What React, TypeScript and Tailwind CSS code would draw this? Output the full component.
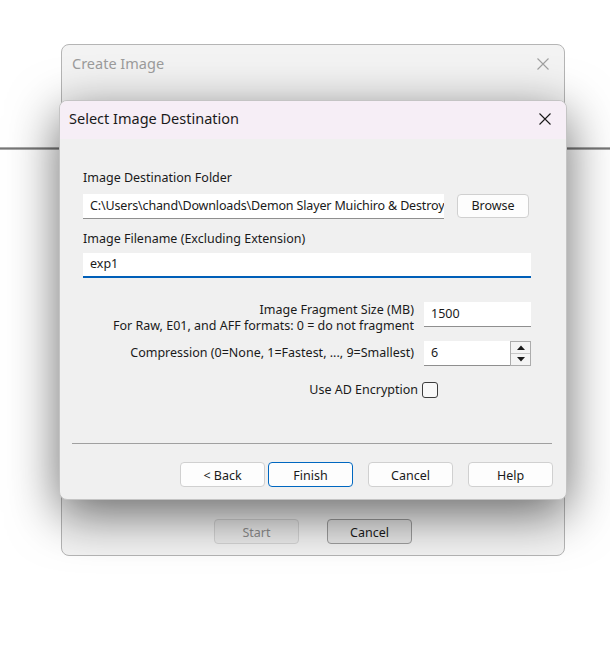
import React from 'react'

function CloseIcon({ color }: { color: string }) {
  return (
    <svg width="14" height="14" viewBox="0 0 14 14" fill="none">
      <path d="M1.5 1.5L12.5 12.5M12.5 1.5L1.5 12.5" stroke={color} strokeWidth="1.1" />
    </svg>
  )
}

function WinButton({ children, primary, className }: { children: React.ReactNode; primary?: boolean; className?: string }) {
  const border = primary ? 'border-[#0067c0]' : 'border-[#d0d0d0]'
  return (
    <button
      className={`h-[25px] w-[85px] rounded-[4px] border ${border} bg-[#fdfdfd] pt-[3px] text-[12.5px] leading-none text-[#1a1a1a] ${className ?? ''}`}
    >
      {children}
    </button>
  )
}

export default function App() {
  return (
    <div
      className="relative h-[657px] w-[610px] overflow-hidden bg-white"
      style={{ fontFamily: '"Segoe UI", "Noto Sans", sans-serif' }}
    >
      {/* app behind the dialogs */}
      <div className="pt-[147px]">
        <div className="h-[3px] border-y border-[#a8a8a8] bg-[#777777]" />
      </div>

      {/* Create Image (parent window) */}
      <div className="absolute left-[61px] top-[44px] flex h-[512px] w-[504px] flex-col rounded-[8px] border border-[#b5b5b5] bg-[#f3f3f3]">
        <div className="flex h-[40px] items-center justify-between pb-[2px] pl-[10px] pr-[14px]">
          <span className="text-[14.5px] text-[#9c9c9c]">Create Image</span>
          <CloseIcon color="#a0a0a0" />
        </div>
        <div className="flex-1" />
        <div className="flex justify-center gap-[28px] pb-[11px]">
          <button className="h-[25px] w-[85px] rounded-[4px] border border-[#d4d4d4] bg-[#ebebeb] pt-[3px] text-[12.5px] leading-none text-[#8c8c8c]">
            Start
          </button>
          <button className="h-[25px] w-[85px] rounded-[4px] border border-[#9c9c9c] bg-[#e6e6e6] pt-[3px] text-[12.5px] leading-none text-[#1a1a1a]">
            Cancel
          </button>
        </div>
      </div>

      {/* Select Image Destination (modal) */}
      <div className="absolute left-[59px] top-[100px] flex h-[400px] w-[508px] flex-col overflow-hidden rounded-[8px] border border-[#c4c4c4] bg-[#f0f0f0] shadow-[0_14px_50px_rgba(0,0,0,0.58)]">
        <div className="flex h-[38px] shrink-0 items-center justify-between bg-[#f6eef6] pb-[3px] pl-[9px] pr-[14px]">
          <span className="text-[14.5px] text-[#1a1a1a]">Select Image Destination</span>
          <CloseIcon color="#1a1a1a" />
        </div>

        <div className="flex flex-col pl-[23px] pr-[35px] pt-[31px] text-[12.5px] text-[#1a1a1a]">
          <div className="h-[16px] leading-[16px]">Image Destination Folder</div>
          <div className="mt-[8px] flex items-start gap-[13px]">
            <div className="flex h-[25px] w-[361px] items-center overflow-hidden whitespace-nowrap border-b border-[#8f8f8f] bg-white pl-[7px] tracking-[-0.15px]">
              C:\Users\chand\Downloads\Demon Slayer Muichiro &amp; Destroy
            </div>
            <button className="h-[24px] w-[72px] rounded-[4px] border border-[#d0d0d0] bg-[#fdfdfd] leading-none">Browse</button>
          </div>

          <div className="mt-[12px] h-[16px] leading-[16px]">Image Filename (Excluding Extension)</div>
          <div className="mt-[6px] flex h-[25px] w-[448px] items-center border-b-2 border-[#005fb8] bg-white pl-[7px]">
            exp1
          </div>

          <div className="mt-[24px] flex items-start gap-[10px]">
            <div className="flex-1 text-right leading-[16px]">
              <div>Image Fragment Size (MB)</div>
              <div>For Raw, E01, and AFF formats: 0 = do not fragment</div>
            </div>
            <div className="flex h-[25px] w-[107px] items-center border-b border-[#8f8f8f] bg-white pl-[7px]">1500</div>
          </div>

          <div className="mt-[7px] flex items-center gap-[10px]">
            <div className="flex-1 text-right">Compression (0=None, 1=Fastest, ..., 9=Smallest)</div>
            <div className="flex h-[25px] w-[107px] bg-white">
              <div className="flex flex-1 items-center border-b border-[#8f8f8f] pl-[7px]">6</div>
              <div className="flex w-[21px] flex-col border border-[#acacac] bg-[#f4f4f4]">
                <div className="flex flex-1 items-center justify-center border-b border-[#c8c8c8]">
                  <svg width="8" height="5" viewBox="0 0 8 5">
                    <path d="M0 5L4 0.5L8 5Z" fill="#1a1a1a" />
                  </svg>
                </div>
                <div className="flex flex-1 items-center justify-center">
                  <svg width="8" height="5" viewBox="0 0 8 5">
                    <path d="M0 0L4 4.5L8 0Z" fill="#1a1a1a" />
                  </svg>
                </div>
              </div>
            </div>
          </div>

          <div className="mr-[93px] mt-[16px] flex items-center justify-end gap-[4px]">
            <span className="leading-[16px]">Use AD Encryption</span>
            <div className="h-[16px] w-[16px] rounded-[3px] border border-[#3c3c3c] bg-[#f8f8f8]" />
          </div>
        </div>

        <div className="flex-1" />
        <div className="ml-[12px] mr-[14px] h-px shrink-0 bg-[#a0a0a0]" />
        <div className="flex shrink-0 items-start justify-end pb-[12px] pr-[13px] pt-[18px]">
          <WinButton>&lt; Back</WinButton>
          <WinButton primary className="ml-[3px]">Finish</WinButton>
          <WinButton className="ml-[15px]">Cancel</WinButton>
          <WinButton className="ml-[15px]">Help</WinButton>
        </div>
      </div>
    </div>
  )
}
